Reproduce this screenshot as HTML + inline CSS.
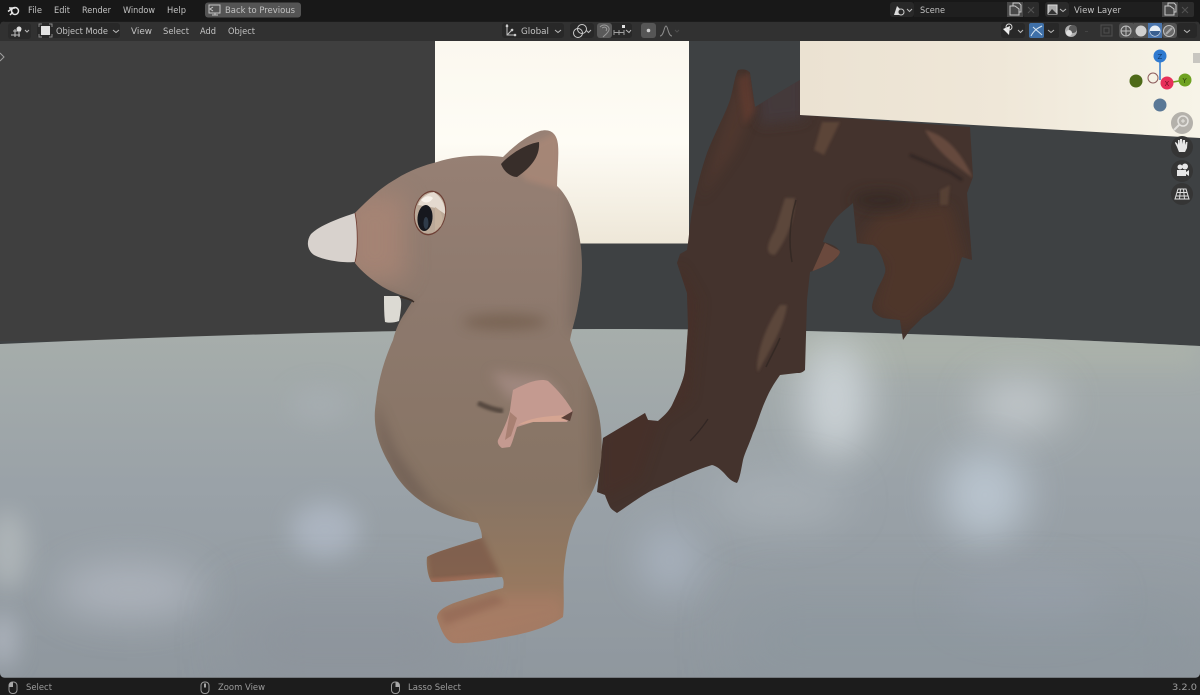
<!DOCTYPE html>
<html lang="en"><head><meta charset="utf-8"><title>Blender</title>
<style>
html,body{margin:0;padding:0;width:1200px;height:695px;overflow:hidden;background:#181818}
svg{display:block}
text{font-family:"DejaVu Sans","Liberation Sans",sans-serif;font-size:9px;fill:#c2c2c2}
</style></head><body>
<svg width="1200" height="695" viewBox="0 0 1200 695" xmlns="http://www.w3.org/2000/svg">
<defs>
<filter id="b30" x="-100%" y="-100%" width="300%" height="300%"><feGaussianBlur stdDeviation="30"/></filter>
<filter id="b20" x="-100%" y="-100%" width="300%" height="300%"><feGaussianBlur stdDeviation="20"/></filter>
<filter id="b12" x="-80%" y="-80%" width="260%" height="260%"><feGaussianBlur stdDeviation="12"/></filter>
<filter id="b6" x="-60%" y="-60%" width="220%" height="220%"><feGaussianBlur stdDeviation="6"/></filter>
<filter id="b3" x="-60%" y="-60%" width="220%" height="220%"><feGaussianBlur stdDeviation="3"/></filter>
<filter id="b1" x="-30%" y="-30%" width="160%" height="160%"><feGaussianBlur stdDeviation="1.2"/></filter>
<filter id="t"><feGaussianBlur stdDeviation="0.3"/></filter>
<clipPath id="vp"><rect x="0" y="21" width="1200" height="657" rx="5"/></clipPath>
<clipPath id="floor"><path d="M0 344Q200 335 400 331Q600 327 806 331Q1000 336 1200 346V678H0Z"/></clipPath>
<clipPath id="bodyclip"><path id="bp" d="M355 213C368 200 380 188 396 179C410 170 425 165 437 162C455 156 480 154 503 157C510 150 525 136 540 131C551 128 557 134 558 145C559 158 557 172 557 186C568 196 576 215 579 235C583 255 583 280 578 305C576 318 572 328 570 340C578 362 590 385 597 407C602 425 603 450 600 468C596 490 585 505 577 517C570 530 567 545 565 560C562 580 565 600 563 617C550 626 530 633 505 637C485 641 465 644 453 643C445 640 441 630 437 618C437 611 445 606 457 602C472 597 488 592 503 588C504 584 504 580 502 577C480 578 450 582 432 582C428 578 426 565 427 557C435 552 460 545 482 538C482 532 480 528 478 523C460 520 445 515 432 508C412 497 398 482 390 465C378 445 372 425 376 402C378 380 385 358 393 340C396 328 400 320 405 313C408 308 410 305 413 300C405 296 395 294 383 287C372 280 362 272 355 263C358 250 358 228 355 213Z"/></clipPath>
<clipPath id="tailclip"><path d="M603 438L645 413L648 420L658 421C666 414 670 410 673 403C680 388 684 378 685 370L688 327L687 293L677 263L680 254L687 250C690 230 690 220 693 207C697 185 702 168 707 153C716 130 725 115 730 100C733 90 735 75 738 70C745 68 749 71 750 73L755 107L800 80V115L970 127L973 177L967 193L972 260L962 257L953 287C945 300 935 310 923 317L910 330L903 340L900 320L883 318C876 315 872 312 872 307C873 298 877 292 877 290C882 280 887 272 885 267C882 255 878 248 873 245L857 243L853 203C847 208 842 212 837 217C830 225 826 233 823 242C832 244 838 247 840 252C838 258 834 261 830 263C822 268 815 270 810 272L807 300L805 370C802 373 800 373 797 373L780 375C775 382 770 390 767 397C760 412 757 425 753 433C749 445 745 452 743 460C741 470 740 478 737 483C730 481 727 476 723 472C719 468 716 466 712 465C695 470 675 480 657 488C645 493 632 503 617 513C614 511 612 510 610 507C608 503 606 498 605 495L597 492Z"/></clipPath>
<linearGradient id="fl" x1="0" y1="0" x2="0" y2="1"><stop offset="0" stop-color="#a7aeab"/><stop offset=".45" stop-color="#9aa2a8"/><stop offset="1" stop-color="#8f979e"/></linearGradient>
<linearGradient id="panel1" x1="0" y1="0" x2="0" y2="1"><stop offset="0" stop-color="#fbf8ef"/><stop offset=".5" stop-color="#fefcf5"/><stop offset="1" stop-color="#eee7d8"/></linearGradient>
<linearGradient id="panel2" x1="0" y1="0" x2="1" y2="0"><stop offset="0" stop-color="#ebe2d2"/><stop offset=".5" stop-color="#efe7d8"/><stop offset="1" stop-color="#f7f4e8"/></linearGradient>
<linearGradient id="fur" x1="0" y1="0" x2="0" y2="1"><stop offset="0" stop-color="#988175"/><stop offset=".35" stop-color="#8d796d"/><stop offset=".7" stop-color="#877464"/><stop offset=".85" stop-color="#94785f"/><stop offset="1" stop-color="#a87c66"/></linearGradient>
</defs>

<rect width="1200" height="695" fill="#181818"/>
<g clip-path="url(#vp)">
<rect x="0" y="21" width="1200" height="657" fill="#3e4143"/>
<rect x="0" y="21" width="436" height="320" fill="#3f3f3f"/>
<!-- floor -->
<g clip-path="url(#floor)">
<rect x="0" y="325" width="1200" height="355" fill="url(#fl)"/>
<rect x="780" y="330" width="420" height="40" fill="#aeb5aa" opacity=".6" filter="url(#b12)"/>
<ellipse cx="835" cy="400" rx="34" ry="60" fill="#cfd6da" opacity=".9" filter="url(#b20)"/>
<ellipse cx="1018" cy="405" rx="45" ry="28" fill="#c8ced2" opacity=".8" filter="url(#b20)"/>
<ellipse cx="985" cy="495" rx="42" ry="46" fill="#bcc7d2" opacity=".9" filter="url(#b20)"/>
<ellipse cx="325" cy="530" rx="34" ry="28" fill="#b0b9c6" opacity=".8" filter="url(#b12)"/>
<ellipse cx="130" cy="590" rx="75" ry="28" fill="#b2b8c1" opacity=".8" filter="url(#b20)"/>
<ellipse cx="320" cy="405" rx="30" ry="18" fill="#a8afb4" opacity=".7" filter="url(#b12)"/>
<ellipse cx="8" cy="550" rx="20" ry="40" fill="#b8bec0" opacity=".7" filter="url(#b12)"/>
<ellipse cx="3" cy="640" rx="14" ry="28" fill="#b8bec8" opacity=".7" filter="url(#b12)"/>
<ellipse cx="670" cy="560" rx="30" ry="36" fill="#acb6c3" opacity=".8" filter="url(#b20)"/>
<ellipse cx="780" cy="500" rx="70" ry="28" fill="#b2bac0" opacity=".5" filter="url(#b20)"/>
<ellipse cx="1030" cy="600" rx="80" ry="26" fill="#9ea5b2" opacity=".5" filter="url(#b20)"/>
<rect x="740" y="600" width="460" height="80" fill="#8b969e" opacity=".5" filter="url(#b30)"/>
<rect x="240" y="600" width="220" height="80" fill="#8a9099" opacity=".5" filter="url(#b30)"/>
</g>
<!-- back panels -->
<rect x="435" y="41" width="254" height="202.500" fill="url(#panel1)"/>
<!-- tail -->
<g clip-path="url(#tailclip)">
<rect x="590" y="60" width="400" height="460" fill="#44332d"/>
<path d="M755 70L805 70V120L760 125Z" fill="#453b3e" opacity=".9" filter="url(#b6)"/>
<path d="M700 200L735 90L742 75L752 110L735 150Z" fill="#5d3e32" opacity=".45" filter="url(#b6)"/>
<path d="M738 78L750 72L755 110L745 125Z" fill="#6f4030" opacity=".5" filter="url(#b3)"/>
<path d="M858 240L880 215L950 205L965 260L950 290L905 330L873 310L885 265Z" fill="#53372b" opacity=".7" filter="url(#b6)"/>
<ellipse cx="880" cy="200" rx="28" ry="10" fill="#322723" opacity=".6" filter="url(#b6)"/>
<path d="M680 265L700 300L690 400L660 420L640 480L600 500L600 440Z" fill="#4a2e25" opacity=".45" filter="url(#b6)"/>
<path d="M825 243L842 252L830 264L812 272Z" fill="#6a4a3c" filter="url(#t)"/>
<path d="M822 122L840 122L824 155L814 150Z" fill="#5c4437" filter="url(#b1)"/>
<path d="M925 130C945 135 960 150 973 178C955 165 935 150 925 130Z" fill="#654a3c" filter="url(#b1)"/>
<path d="M785 198L795 198C795 215 790 235 775 255C765 255 766 245 775 230Z" fill="#5c463b" filter="url(#b1)"/>
<path d="M780 305L787 305C785 325 770 350 758 372C755 365 760 335 780 305Z" fill="#5c463b" filter="url(#b1)"/>
<path d="M910 155L950 172L962 180" stroke="#2b2220" stroke-width="3" fill="none" opacity=".7" filter="url(#b1)"/>
<path d="M796 200C790 220 788 240 792 262" stroke="#2f2521" stroke-width="1.500" fill="none" opacity=".7" filter="url(#t)"/>
<path d="M780 338C776 348 770 358 766 367" stroke="#2f2521" stroke-width="1.500" fill="none" opacity=".7" filter="url(#t)"/>
<path d="M708 419C702 428 695 436 690 441" stroke="#2b2120" stroke-width="1.200" fill="none" opacity=".7" filter="url(#t)"/>
<path d="M940 190L950 185L948 205L940 205Z" fill="#5c4537" opacity=".8" filter="url(#b1)"/>
</g>
<path d="M800 41H1200V138L800 115Z" fill="url(#panel2)"/>
<!-- front tooth -->
<path d="M384 296L398 296C402 297 402 305 399 321C394 323 388 323 385 322C384 314 384 305 384 296Z" fill="#dcdad3" filter="url(#t)"/>
<!-- body -->
<g clip-path="url(#bodyclip)">
<rect x="350" y="125" width="260" height="525" fill="url(#fur)"/>
<path d="M375 400C378 480 420 515 470 525L430 500L395 450Z" fill="#5f5048" opacity=".5" filter="url(#b6)"/>
<rect x="345" y="195" width="60" height="85" fill="#ab8676" opacity=".75" filter="url(#b12)"/>
<rect x="570" y="190" width="25" height="140" fill="#5c534c" opacity=".35" filter="url(#b6)"/>
<rect x="590" y="380" width="20" height="110" fill="#5e5247" opacity=".35" filter="url(#b6)"/>
<ellipse cx="505" cy="322" rx="42" ry="8" fill="#6b5442" opacity=".55" filter="url(#b6)"/>
<path d="M490 372L545 378L565 398L510 400Z" fill="#a98f88" opacity=".7" filter="url(#b6)"/>
<path d="M426 550L482 536L500 575L430 584Z" fill="#795444" opacity=".65" filter="url(#b3)"/>
<path d="M430 578L495 574L498 582L430 584Z" fill="#a9705a" opacity=".5" filter="url(#b1)"/>
<path d="M435 612L500 595L560 595L565 620L450 645Z" fill="#ab7e66" opacity=".5" filter="url(#b6)"/>
<path d="M440 612L495 595L505 602L445 625Z" fill="#8a5f4e" opacity=".45" filter="url(#b3)"/>
<path d="M510 155L560 130L560 190L525 180Z" fill="#b08a78" opacity=".6" filter="url(#b3)"/>
<path d="M375 285L415 300L385 340L375 320Z" fill="#7a675c" opacity=".4" filter="url(#b3)"/>
</g>
<path d="M400 297C405 298 410 299 414 302" stroke="#3a2d28" stroke-width="1.500" fill="none" filter="url(#t)"/>
<!-- ear hole -->
<path d="M501 164C510 154 526 144 539 142C540 155 533 166 517 177C511 177 504 172 501 164Z" fill="#382d2a" filter="url(#t)"/>
<!-- eye -->
<ellipse cx="430" cy="213" rx="16" ry="22.500" transform="rotate(10 430 213)" fill="#6e4035"/>
<ellipse cx="430" cy="213" rx="15" ry="21" transform="rotate(10 430 213)" fill="#bba998"/>
<path d="M418 205C421 197 428 193 434 192C441 197 446 205 445 214L436 208Z" fill="#e4dacf" filter="url(#t)"/>
<ellipse cx="425" cy="218" rx="7.500" ry="13" fill="#16181e" transform="rotate(5 425 218)"/>
<ellipse cx="426" cy="223" rx="2.500" ry="6" fill="#2f3b49"/>
<path d="M421 200C425 196 430 195 433 198C430 203 425 204 421 200Z" fill="#f8f2ea"/>
<path d="M435 207C442 211 444 218 441 226L435 231Z" fill="#c6b29e" filter="url(#t)"/>
<!-- snout nose -->
<path d="M355 213C340 218 320 225 311 234C306 241 307 250 314 255C325 261 345 263 355 262C358 250 358 228 355 213Z" fill="#d8d2cd" filter="url(#t)"/>
<path d="M355 213C358 228 358 250 355 262" stroke="#6e3a30" stroke-width=".8" fill="none"/>
<!-- arm -->
<path d="M478 403C488 408 495 410 503 411" stroke="#3f352f" stroke-width="5" fill="none" opacity=".7" filter="url(#b1)"/>
<path d="M513 390C528 382 540 378 548 381C558 390 568 402 573 412L567 422L533 422L517 427C514 436 512 444 510 447L502 448C499 446 497 443 498 440C503 430 508 420 510 410C511 402 512 396 513 390Z" fill="#c49a90" filter="url(#t)"/>
<path d="M518 425C530 417 550 416 568 415L566 421L533 422Z" fill="#d5a592" filter="url(#t)"/>
<path d="M510 412L517 418L511 436L505 440Z" fill="#9d7666" opacity=".7" filter="url(#t)"/>
<path d="M561 418L573 411L570 421Z" fill="#5a4038"/>
<!-- header -->
<rect x="0" y="21" width="1200" height="20" fill="#313131"/>
<rect x="0" y="21" width="1200" height="1" fill="#1c1c1c"/>
<path d="M0 53L4 57L0 61" stroke="#a0a0a0" stroke-width="1" fill="none"/>
<!-- gizmo -->
<path d="M1160 58V80" stroke="#2f7ad0" stroke-width="1.500"/>
<path d="M1167 83L1185 80" stroke="#6ea020" stroke-width="1.500"/>
<circle cx="1160" cy="56" r="6.500" fill="#2f7ad0"/><text x="1157.500" y="59" style="fill:#123a6e;font-size:7px">Z</text>
<circle cx="1136" cy="81" r="6.500" fill="#4e6a18"/>
<circle cx="1160" cy="105" r="6.500" fill="#5a7896"/>
<circle cx="1153" cy="78" r="5" fill="none" stroke="#8c5c5c" stroke-width="1"/>
<circle cx="1185" cy="80" r="6.500" fill="#6fa222"/><text x="1182.500" y="83" style="fill:#2c4408;font-size:7px">Y</text>
<circle cx="1167" cy="83" r="6.500" fill="#e8305a"/><text x="1164.500" y="86" style="fill:#700c24;font-size:7px">X</text>
<rect x="1193" y="53" width="7" height="10" fill="#c8c6c0"/>
<!-- nav buttons -->
<circle cx="1182" cy="123" r="11" fill="#b4b1ab"/>
<circle cx="1183" cy="121" r="5" fill="none" stroke="#e4e2de" stroke-width="1.500"/>
<path d="M1179 125L1174 130" stroke="#e4e2de" stroke-width="2"/>
<path d="M1181 121h4M1183 119v4" stroke="#e4e2de" stroke-width="1"/>
<circle cx="1182" cy="147" r="11" fill="#353535"/>
<circle cx="1182" cy="171" r="11" fill="#353535"/>
<circle cx="1182" cy="194" r="11" fill="#353535"/>
<path d="M1177 147L1175 143V142L1177 143L1178 145V140L1179.500 140L1180 144V139H1182L1182.500 144L1183 140H1185L1185 145L1186 142H1187.500L1187 148L1185 152H1179Z" fill="#e6e6e6"/>
<circle cx="1180" cy="167" r="2.500" fill="#e6e6e6"/><circle cx="1185" cy="166.500" r="3" fill="#e6e6e6"/>
<rect x="1177" y="170" width="9" height="6" fill="#e6e6e6"/><path d="M1186 172L1189 170V176L1186 174Z" fill="#e6e6e6"/>
<path d="M1178 189H1186L1189 199H1175Z M1180.500 189L1179.500 199M1183.500 189L1184.500 199M1177 192.500H1187M1176 196H1188" fill="none" stroke="#e0e0e0" stroke-width="1"/>

<!-- header widgets -->
<rect x="8" y="23" width="23" height="16" rx="3" fill="#2a2a2a"/>
<path d="M11 35H20M13 31H21M15 29V37M19 29V37" stroke="#c0c0c0" stroke-width="1"/>
<circle cx="19" cy="29" r="2.500" fill="#e0e0e0"/>
<path d="M25 30L27 32L29 30" stroke="#bbb" fill="none"/>
<rect x="37" y="23" width="83" height="15" rx="3" fill="#282828"/>
<rect x="41" y="26" width="9" height="9" fill="#e2e2e2"/>
<path d="M39 27V24H42M49 24H52V27M52 34V37H49M42 37H39V34" stroke="#8a8a8a" fill="none"/>
<text x="56" y="34" textLength="52" lengthAdjust="spacingAndGlyphs" filter="url(#t)">Object Mode</text>
<path d="M113 30L116 32.500L119 30" stroke="#bbb" fill="none"/>
<text x="131" y="34" textLength="21" lengthAdjust="spacingAndGlyphs" filter="url(#t)">View</text>
<text x="163" y="34" textLength="26" lengthAdjust="spacingAndGlyphs" filter="url(#t)">Select</text>
<text x="200" y="34" textLength="16" lengthAdjust="spacingAndGlyphs" filter="url(#t)">Add</text>
<text x="228" y="34" textLength="27" lengthAdjust="spacingAndGlyphs" filter="url(#t)">Object</text>

<rect x="502" y="23" width="62" height="15" rx="3" fill="#282828"/>
<path d="M507 24V35H516M507 35L513 29" stroke="#c0c0c0" fill="none"/>
<circle cx="507" cy="26" r="1.300" fill="#ccc"/><circle cx="512" cy="30" r="1.300" fill="#ccc"/><circle cx="515" cy="35" r="1.300" fill="#ccc"/>
<text x="521" y="34" textLength="28" lengthAdjust="spacingAndGlyphs" filter="url(#t)">Global</text>
<path d="M555 30L558 32.500L561 30" stroke="#bbb" fill="none"/>
<rect x="570" y="23" width="24" height="15" rx="3" fill="#282828"/>
<circle cx="578" cy="33" r="4.500" fill="none" stroke="#ccc"/><circle cx="582" cy="29" r="4.500" fill="none" stroke="#ccc"/>
<path d="M586 30L588.500 32.500L591 30" stroke="#bbb" fill="none"/>
<rect x="597" y="23" width="35" height="15" rx="3" fill="#282828"/>
<rect x="597" y="23" width="15" height="15" rx="3" fill="#5a5a5a"/>
<path d="M600 27C604 23 610 26 609 30C608 33 605 35 603 37M602 28C605 26 608 28 606 31" stroke="#9a9a9a" fill="none"/>
<path d="M614 35V30M624 35V30M614 32.500H624M619 30V35" stroke="#a0a0a0" fill="none"/>
<rect x="622" y="25" width="3" height="3" fill="#e0e0e0"/>
<path d="M626 30L629 32.500L631 30" stroke="#bbb" fill="none"/>
<rect x="641" y="23" width="15" height="15" rx="3" fill="#565656"/>
<circle cx="648.500" cy="30.500" r="1.800" fill="#cfcfcf"/>
<path d="M660 36C664 36 664 26 666 26C668 26 668 36 672 36" stroke="#8c8c8c" fill="none"/>
<path d="M675 30L677 32L679 30" stroke="#4e4e4e" fill="none"/>

<!-- right header -->
<rect x="1001" y="23" width="24" height="15" rx="3" fill="#282828"/>
<path d="M1003 29L1010 26L1009 35Z" fill="#eee"/><circle cx="1009" cy="27" r="3" fill="none" stroke="#ddd"/>
<path d="M1018 30L1020.500 32.500L1023 30" stroke="#bbb" fill="none"/>
<rect x="1029" y="23" width="15" height="15" rx="2" fill="#3f70a8"/>
<path d="M1031 36C1034 30 1038 28 1042 26M1033 27C1036 30 1040 33 1042 35" stroke="#d8e6f2" fill="none"/>
<rect x="1044" y="23" width="15" height="15" rx="2" fill="#282828"/>
<path d="M1048 30L1051 32.500L1054 30" stroke="#bbb" fill="none"/>
<circle cx="1071" cy="31" r="6" fill="#b0b0b0"/><circle cx="1073" cy="29" r="4" fill="#5a5a5a"/><circle cx="1069" cy="33" r="3" fill="#e0e0e0"/>
<path d="M1085 31.500h3" stroke="#444"/>
<rect x="1101" y="25" width="11" height="11" fill="none" stroke="#505050"/><rect x="1104" y="28" width="5" height="5" fill="none" stroke="#505050"/>
<rect x="1119" y="23" width="16" height="15" rx="3" fill="#525252"/>
<circle cx="1126" cy="31" r="5" fill="none" stroke="#c0c0c0"/><path d="M1121 31H1131M1126 26V36" stroke="#c0c0c0"/>
<rect x="1134" y="23" width="14" height="15" fill="#525252"/>
<circle cx="1141" cy="31" r="5.500" fill="#cfcfcf"/>
<rect x="1148" y="23" width="14" height="15" fill="#4a75ad"/>
<circle cx="1155" cy="31" r="5.500" fill="#e8eef5"/><path d="M1150 31A5 5 0 0 0 1160 31Z" fill="#3a5f90"/>
<rect x="1162" y="23" width="15" height="15" rx="3" fill="#525252"/>
<circle cx="1169" cy="31" r="5.500" fill="#6a6a6a" stroke="#c0c0c0"/><path d="M1166 34L1172 28" stroke="#aaa" stroke-width="2"/>
<rect x="1177" y="23" width="20" height="15" rx="3" fill="#282828"/>
<path d="M1184 30L1187 32.500L1190 30" stroke="#bbb" fill="none"/>

<rect x="0" y="677" width="1200" height="1" fill="#4c4c4c" opacity=".4"/>
</g>

<!-- topbar -->
<circle cx="15" cy="11" r="3.500" fill="none" stroke="#e6e6e6" stroke-width="1.500"/>
<path d="M9 8H15M8 11.500L12 8.500M10 15L13 12" stroke="#e6e6e6" stroke-width="1.500" fill="none"/>
<text x="28" y="13" textLength="14" lengthAdjust="spacingAndGlyphs" filter="url(#t)">File</text>
<text x="54" y="13" textLength="16" lengthAdjust="spacingAndGlyphs" filter="url(#t)">Edit</text>
<text x="82" y="13" textLength="29" lengthAdjust="spacingAndGlyphs" filter="url(#t)">Render</text>
<text x="123" y="13" textLength="32" lengthAdjust="spacingAndGlyphs" filter="url(#t)">Window</text>
<text x="167" y="13" textLength="19" lengthAdjust="spacingAndGlyphs" filter="url(#t)">Help</text>
<rect x="205" y="2.500" width="96" height="15" rx="3" fill="#545454"/>
<rect x="209" y="5" width="11" height="8" fill="none" stroke="#c4c4c4"/><path d="M212 15H218M215 13V15M213 7L210 9L213 11" stroke="#c4c4c4" fill="none"/>
<text x="225" y="13" textLength="70" lengthAdjust="spacingAndGlyphs" filter="url(#t)">Back to Previous</text>

<rect x="890" y="2" width="24" height="15" rx="3" fill="#282828"/>
<path d="M894 15L897 6L900 9L903 11L899 15Z" fill="#dcdcdc"/><circle cx="901" cy="12" r="3" fill="#282828" stroke="#ccc"/>
<path d="M907 9L909.500 11.500L912 9" stroke="#bbb" fill="none"/>
<rect x="914" y="2" width="93" height="15" fill="#1f1f1f"/>
<text x="920" y="13" textLength="25" lengthAdjust="spacingAndGlyphs" filter="url(#t)">Scene</text>
<rect x="1007" y="2" width="16" height="15" fill="#484848"/>
<path d="M1010 6H1015L1019 9V15H1010Z M1013 6V3H1019L1021 5V12H1019" fill="none" stroke="#c8c8c8"/>
<rect x="1023" y="2" width="16" height="15" rx="2" fill="#2c2c2c"/>
<path d="M1028 7L1034 13M1034 7L1028 13" stroke="#535353"/>
<rect x="1045" y="2" width="24" height="15" rx="3" fill="#2a2a2a"/>
<rect x="1048" y="5" width="9" height="9" fill="#aaa" stroke="#ddd"/><path d="M1048 14L1052 9L1057 14Z" fill="#333"/>
<path d="M1060 9L1063 11.500L1066 9" stroke="#bbb" fill="none"/>
<rect x="1069" y="2" width="93" height="15" fill="#1f1f1f"/>
<text x="1074" y="13" textLength="47" lengthAdjust="spacingAndGlyphs" filter="url(#t)">View Layer</text>
<rect x="1162" y="2" width="16" height="15" fill="#484848"/>
<path d="M1165 6H1170L1174 9V15H1165Z M1168 6V3H1174L1176 5V12H1174" fill="none" stroke="#c8c8c8"/>
<rect x="1178" y="2" width="16" height="15" rx="2" fill="#2c2c2c"/>
<path d="M1182 7L1188 13M1188 7L1182 13" stroke="#535353"/>

<!-- status bar -->
<rect x="0" y="678" width="1200" height="17" fill="#1c1c1c"/>
<g fill="none" stroke="#9a9a9a">
<rect x="9" y="682" width="8" height="11.500" rx="3.500"/>
<rect x="201" y="682" width="8" height="11.500" rx="3.500"/>
<rect x="391.500" y="682" width="8" height="11.500" rx="3.500"/>
</g>
<path d="M9 685.500Q9 682 13 682V687H9Z" fill="#a8a8a8"/>
<rect x="204" y="683.500" width="2" height="4" fill="#a8a8a8"/>
<path d="M395.500 682Q399.500 682 399.500 685.500V687H395.500Z" fill="#a8a8a8"/>
<g filter="url(#t)">
<text x="26" y="690" textLength="26" lengthAdjust="spacingAndGlyphs" style="fill:#9c9c9c">Select</text>
<text x="218" y="690" textLength="47" lengthAdjust="spacingAndGlyphs" style="fill:#9c9c9c">Zoom View</text>
<text x="408" y="690" textLength="53" lengthAdjust="spacingAndGlyphs" style="fill:#9c9c9c">Lasso Select</text>
<text x="1172" y="690" textLength="25" lengthAdjust="spacingAndGlyphs" style="fill:#9c9c9c">3.2.0</text>
</g>
</svg>
</body></html>
